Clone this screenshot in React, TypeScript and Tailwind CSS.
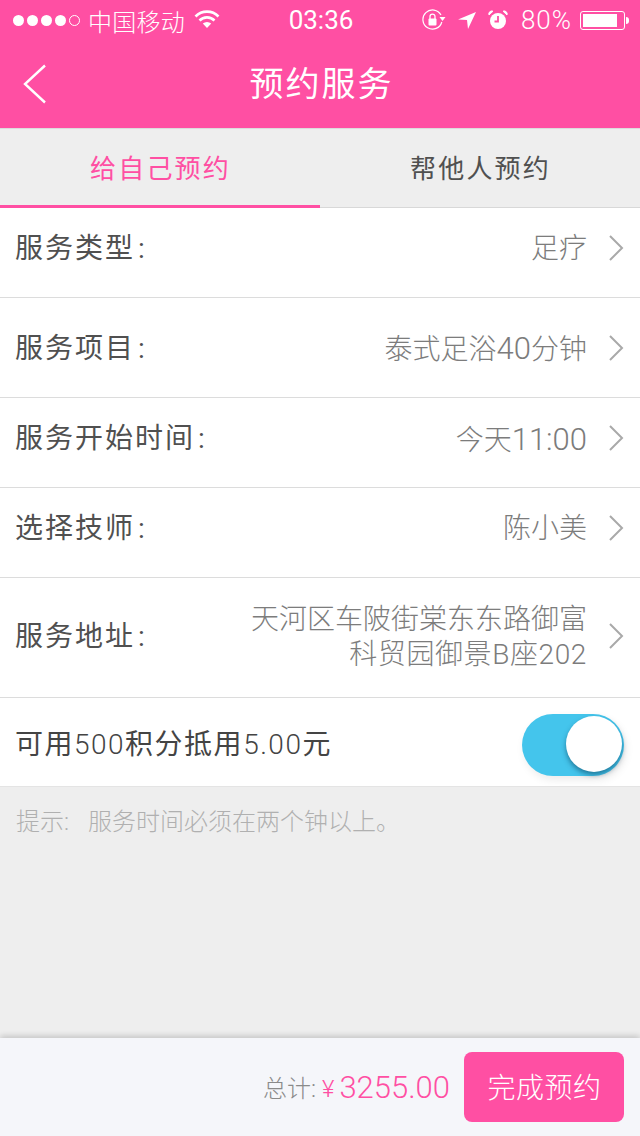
import type { ReactNode } from "react";

const FONT = "font-['Roboto','Noto_Sans_CJK_SC',sans-serif]";

function Chevron() {
  return (
    <svg width="16" height="28" viewBox="0 0 16 28" fill="none" className="shrink-0">
      <path d="M2 2 L14 14 L2 26" stroke="#a9a9a9" strokeWidth="2" />
    </svg>
  );
}

function Num({ children }: { children: ReactNode }) {
  return <span className="text-[31px] leading-none">{children}</span>;
}

function Row({ label, children, h, multi }: { label: string; children: ReactNode; h: string; multi?: boolean }) {
  return (
    <div className={`flex items-center justify-between border-b border-[#dcdcdc] pl-[15px] pr-4 bg-white shrink-0 ${h}`}>
      <span className="text-[28px] leading-none tracking-[2px] text-[#505050] whitespace-nowrap mt-[2px]">
        {label}
        <span className="ml-[3px]">:</span>
      </span>
      <div className="flex items-center gap-[21px]">
        <div className={`text-[28px] text-[#7c7c7c] font-light text-right mt-[2px] ${multi ? "leading-[35px] w-[340px]" : "leading-none"}`}>{children}</div>
        <Chevron />
      </div>
    </div>
  );
}

export default function App() {
  return (
    <div className={`w-[640px] h-[1136px] flex flex-col bg-[#eeeeee] overflow-hidden ${FONT}`}>
      <header className="bg-[#ff4fa3] text-white h-[128px] shrink-0 flex flex-col">
        <div className="h-[40px] flex items-center justify-between pl-[13px] pr-[11px]">
          <div className="flex items-center w-[240px]">
            <div className="flex items-center gap-[3px]">
              <i className="block w-[11px] h-[11px] rounded-full bg-white" />
              <i className="block w-[11px] h-[11px] rounded-full bg-white" />
              <i className="block w-[11px] h-[11px] rounded-full bg-white" />
              <i className="block w-[11px] h-[11px] rounded-full bg-white" />
              <i className="block w-[11px] h-[11px] rounded-full border border-white" />
            </div>
            <span className="ml-[8px] text-[24px] leading-none tracking-[0.25px] font-light mt-[5px]">中国移动</span>
            <svg width="26" height="20" viewBox="0 0 26 20" className="ml-[9px] -mt-[3px]" fill="none" stroke="#fff" strokeWidth="2.6">
              <path d="M1.5 7.5 A16 16 0 0 1 24.5 7.5" />
              <path d="M5.5 11.5 A10.5 10.5 0 0 1 20.5 11.5" />
              <path d="M13 19 L8.8 14.6 A6 6 0 0 1 17.2 14.6 Z" fill="#fff" stroke="none" />
            </svg>
          </div>
          <span className="text-[26px] leading-none font-normal">03:36</span>
          <div className="flex items-center justify-end w-[240px]">
            <svg width="24" height="22" viewBox="0 0 24 22" fill="none" className="mr-[12px]">
              <path d="M19 6 A9.6 9.6 0 1 0 19.8 13" stroke="#fff" strokeWidth="1.2" />
              <path d="M17.5 8 L23.5 8 L20.5 12 Z" fill="#fff" />
              <rect x="6.5" y="9.5" width="8" height="7" rx="1" fill="#fff" />
              <path d="M8 10 V7.6 A2.5 2.5 0 0 1 13 7.6 V10" stroke="#fff" strokeWidth="1.3" />
            </svg>
            <svg width="18" height="18" viewBox="0 0 18 18" className="mr-[12px]">
              <path d="M18 1 L10 18 L9 9 L0 8.5 Z" fill="#fff" />
            </svg>
            <svg width="20" height="20" viewBox="0 0 20 20" className="mr-[13px]" fill="none">
              <circle cx="10" cy="11" r="8" fill="#fff" />
              <path d="M10 6 V11.5 H6.5" stroke="#ff4fa3" strokeWidth="1.8" />
              <path d="M1 5 L5 1.2 A3 3 0 0 0 1 5 Z M19 5 L15 1.2 A3 3 0 0 1 19 5 Z" fill="#fff" stroke="#fff" />
            </svg>
            <span className="text-[26px] leading-none tracking-[1px] font-light">80%</span>
            <div className="ml-[8px] w-[45px] h-[19px] border border-white rounded-[3px] p-[2px]">
              <div className="w-[34px] h-full bg-white" />
            </div>
            <div className="ml-[1px] w-[3px] h-[7px] bg-white rounded-r-sm" />
          </div>
        </div>
        <div className="flex-1 relative flex items-center justify-center">
          <svg width="24" height="42" viewBox="0 0 24 42" fill="none" className="absolute left-[23px] top-[23px]">
            <path d="M22 2.5 L2 21 L22 39.5" stroke="#fff" strokeWidth="2.4" />
          </svg>
          <h1 className="text-[34px] leading-none tracking-[2px] font-normal ml-[3px]">预约服务</h1>
        </div>
      </header>

      <nav className="h-[80px] shrink-0 flex border-b border-[#d8d8d8] border-t-[#dcdcdc] border-t">
        <div className="w-[320px] flex items-center justify-center pt-[3px] pl-[1px] text-[26px] tracking-[2.2px] font-normal text-[#ff4fa3] border-b-[3px] border-[#ff4fa3] -mb-px leading-none">给自己预约</div>
        <div className="w-[320px] flex items-center justify-center pt-[1px] pl-[1px] text-[26px] tracking-[2.2px] text-[#505050] leading-none">帮他人预约</div>
      </nav>

      <Row label="服务类型" h="h-[90px] pb-[9px]">足疗</Row>
      <Row label="服务项目" h="h-[100px]">泰式足浴<Num>40</Num>分钟</Row>
      <Row label="服务开始时间" h="h-[90px] pb-[9px]">今天<Num>11:00</Num></Row>
      <Row label="选择技师" h="h-[90px] pb-[9px]">陈小美</Row>
      <Row label="服务地址" h="h-[120px] pb-[3px]" multi>
        <div>天河区车陂街棠东东路御富</div>
        <div className="tracking-[0.6px]">科贸园御景B座202</div>
      </Row>

      <div className="h-[89px] bg-white border-b border-[#e4e4e4] flex items-center justify-between pl-[15px] pr-4 shrink-0">
        <span className="text-[28px] leading-none text-[#444] tracking-[1.5px] mt-[6px]">
          可用<span className="font-light">500</span>积分抵用<span className="font-light">5.00</span>元
        </span>
        <div className="relative w-[102px] h-[62px] rounded-full bg-[#44c5ec] mt-[6px] shadow-[2px_4px_8px_rgba(0,0,0,0.08)]">
          <div className="absolute right-[2px] top-[2px] w-[56px] h-[56px] rounded-full bg-white shadow-[0px_3px_5px_rgba(0,50,80,0.5)]" />
        </div>
      </div>

      <p className="pl-4 pt-[23px] text-[24px] leading-none font-light text-[#b0b0b0] flex-1 whitespace-nowrap">
        提示:<span className="ml-[19px]">服务时间必须在两个钟以上。</span>
      </p>

      <footer className="h-[98px] shrink-0 bg-[#f5f6fa] shadow-[0_-2px_6px_rgba(0,0,0,0.18)] flex items-center justify-end pl-4 pr-4">
        <span className="text-[24px] leading-none text-[#8a8a8a] font-light mt-1">总计:</span>
        <span className="ml-[6px] text-[24px] leading-none text-[#ff4fa3] font-light mt-1">¥</span>
        <span className="ml-[5px] text-[31px] leading-none text-[#ff4fa3] font-light">3255.00</span>
        <div className="ml-[14px] w-[160px] h-[70px] rounded-[8px] bg-[#ff4fa3] flex items-center justify-center text-white text-[28px] font-light leading-none tracking-[0.5px] pt-[3px] pl-[1px]">完成预约</div>
      </footer>
    </div>
  );
}
